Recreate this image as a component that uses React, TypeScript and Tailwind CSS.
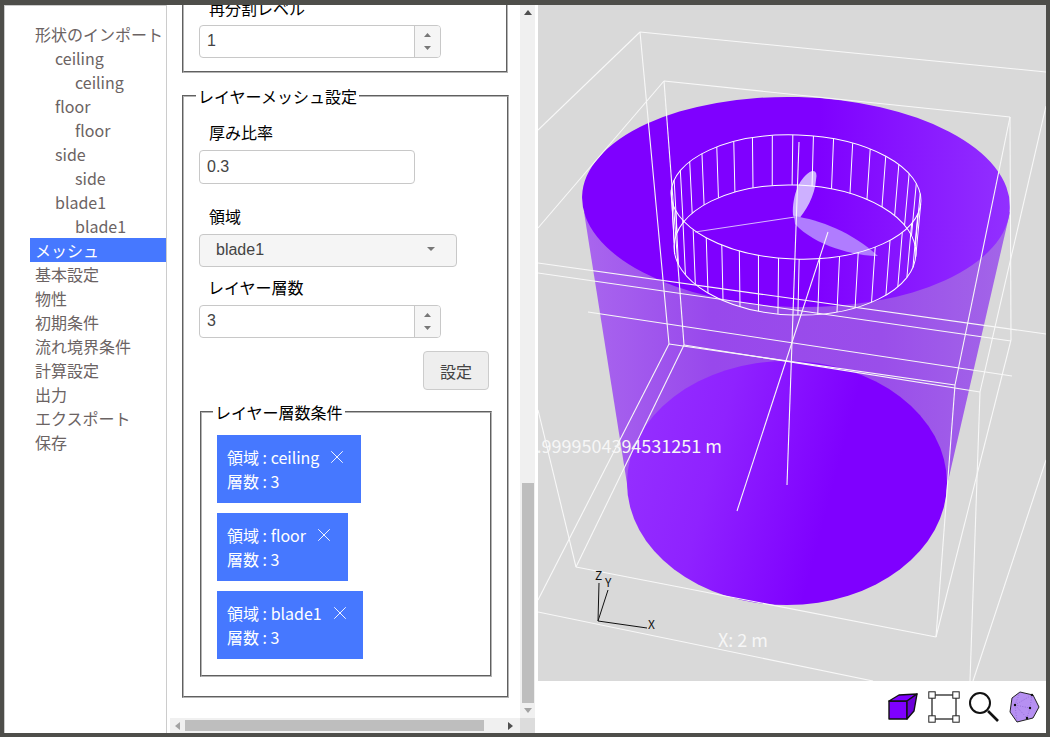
import { X } from "lucide-react";

const cjk = "font-['Noto_Sans_CJK_JP',sans-serif]";
const sans = "font-['Liberation_Sans',sans-serif]";

const navItems = [
  { label: "形状のインポート", indent: "pl-[5px]" },
  { label: "ceiling", indent: "pl-[25px]" },
  { label: "ceiling", indent: "pl-[45px]" },
  { label: "floor", indent: "pl-[25px]" },
  { label: "floor", indent: "pl-[45px]" },
  { label: "side", indent: "pl-[25px]" },
  { label: "side", indent: "pl-[45px]" },
  { label: "blade1", indent: "pl-[25px]" },
  { label: "blade1", indent: "pl-[45px]" },
  { label: "メッシュ", indent: "pl-[5px]", active: true },
  { label: "基本設定", indent: "pl-[5px]" },
  { label: "物性", indent: "pl-[5px]" },
  { label: "初期条件", indent: "pl-[5px]" },
  { label: "流れ境界条件", indent: "pl-[5px]" },
  { label: "計算設定", indent: "pl-[5px]" },
  { label: "出力", indent: "pl-[5px]" },
  { label: "エクスポート", indent: "pl-[5px]" },
  { label: "保存", indent: "pl-[5px]" },
];

const chips = ["ceiling", "floor", "blade1"];

// wireframe edges in screen coordinates
const boxLines = [
  [538, 130, 640, 32],
  [538, 228, 664, 81],
  [640, 32, 669, 344],
  [664, 81, 684, 345],
  [640, 32, 1046, 72],
  [664, 81, 1010, 117],
  [1010, 117, 1011, 340],
  [1010, 117, 955, 385],
  [955, 385, 936, 637],
  [1011, 340, 936, 637],
  [1046, 106, 980, 392],
  [980, 392, 970, 681],
  [1046, 460, 973, 681],
  [538, 263, 1046, 334],
  [538, 273, 1011, 341],
  [588, 312, 1012, 376],
  [669, 344, 955, 385],
  [684, 345, 980, 392],
  [669, 344, 538, 600],
  [684, 345, 576, 567],
  [538, 410, 576, 567],
  [576, 567, 936, 637],
  [538, 612, 873, 681],
  [799, 142, 787, 485],
  [828, 232, 737, 511],
];

const ringPoint = (cx: number, cy: number, rx: number, ry: number, t: number) => {
  const tilt = (2 * Math.PI) / 180;
  const x = rx * Math.cos(t);
  const y = ry * Math.sin(t);
  return [cx + x * Math.cos(tilt) - y * Math.sin(tilt), cy + x * Math.sin(tilt) + y * Math.cos(tilt)];
};

const ringSpokes = Array.from({ length: 38 }, (_, i) => {
  const t = (i / 38) * Math.PI * 2 + 0.04;
  return [...ringPoint(796, 197, 125, 62, t), ...ringPoint(795, 250, 121, 65, t)];
});

const Scene = () => (
  <svg viewBox="538 5 508 676" className="block h-[676px] w-[508px]">
    <defs>
      <linearGradient id="side" x1="0" x2="1" y1="0" y2="0">
        <stop offset="0" stopColor="#a966ee" />
        <stop offset="0.3" stopColor="#9848ec" />
        <stop offset="0.7" stopColor="#9a4eea" />
        <stop offset="1" stopColor="#a366e8" />
      </linearGradient>
      <linearGradient id="top" x1="0" x2="1" y1="0" y2="0">
        <stop offset="0" stopColor="#7f00ff" />
        <stop offset="0.55" stopColor="#7f00ff" />
        <stop offset="1" stopColor="#9230ff" />
      </linearGradient>
      <linearGradient id="bottom" x1="0" x2="1" y1="0.2" y2="0.4">
        <stop offset="0" stopColor="#9530ff" />
        <stop offset="0.3" stopColor="#8f22ff" />
        <stop offset="0.68" stopColor="#7f00ff" />
        <stop offset="1" stopColor="#7f00ff" />
      </linearGradient>
    </defs>
    <rect x="538" y="5" width="508" height="676" fill="#d9d9d9" />
    <polygon points="584,212 1010,212 946,490 628,490" fill="url(#side)" />
    <ellipse cx="787" cy="483" rx="160" ry="122" fill="url(#bottom)" />
    <ellipse cx="796" cy="202" rx="214" ry="105" transform="rotate(1.5 796 202)" fill="url(#top)" />
    <path d="M812 171 Q818 170 816 180 C815 195 806 212 796 222 L793 215 C792 195 800 176 812 171Z" fill="#cdb0ff" />
    <path d="M794 216 C820 220 852 232 878 256 C855 256 815 246 795 224Z" fill="#b07cff" />
    <line x1="695" y1="232" x2="795" y2="217" stroke="#d9b8ff" strokeWidth="1" />
    <g fill="none" stroke="#ffffff" strokeWidth="1">
      <ellipse cx="796" cy="197" rx="125" ry="62" transform="rotate(2 796 197)" />
      <ellipse cx="795" cy="250" rx="121" ry="65" transform="rotate(2 795 250)" />
      {ringSpokes.map((l, i) => (
        <line key={i} x1={l[0]} y1={l[1]} x2={l[2]} y2={l[3]} />
      ))}
    </g>
    <g stroke="#f8f8f8" strokeWidth="1.1">
      {boxLines.map((l, i) => (
        <line key={i} x1={l[0]} y1={l[1]} x2={l[2]} y2={l[3]} />
      ))}
    </g>
    <g stroke="#111111" strokeWidth="1" fill="none">
      <line x1="598" y1="621" x2="599" y2="583" />
      <line x1="598" y1="621" x2="608" y2="590" />
      <line x1="598" y1="621" x2="647" y2="628" />
    </g>
    <g fill="#111111" fontSize="12" fontFamily="'Noto Sans CJK JP', sans-serif">
      <text x="595" y="580">Z</text>
      <text x="605" y="587">Y</text>
      <text x="648" y="629">X</text>
    </g>
    <g fill="#f6f6f6" fontFamily="'Noto Sans CJK JP', sans-serif" fontSize="18">
      <text x="722" y="453" textAnchor="end">Y: 1.9999504394531251 m</text>
      <text x="718" y="647">X: 2 m</text>
    </g>
  </svg>
);

const ToolIcons = () => (
  <svg viewBox="886 690 156 36" className="block h-[36px] w-[156px]">
    <g stroke="#111111" strokeWidth="1.4" strokeLinejoin="round">
      <polygon points="889,701 907,701 907,719 889,719" fill="#7f00ff" />
      <polygon points="889,701 899,695 917,694 907,701" fill="#7f00ff" />
      <polygon points="907,701 917,694 914,711 907,719" fill="#6c00d8" />
    </g>
    <rect x="932" y="695" width="24" height="24" fill="none" stroke="#444444" strokeWidth="1.5" />
    {[
      [932, 695],
      [956, 695],
      [932, 719],
      [956, 719],
    ].map(([x, y]) => (
      <rect key={`${x}-${y}`} x={x - 3.2} y={y - 3.2} width="6.4" height="6.4" fill="#ffffff" stroke="#222222" strokeWidth="1" />
    ))}
    <circle cx="980" cy="703" r="10" fill="none" stroke="#111111" strokeWidth="2" />
    <line x1="988" y1="711" x2="998" y2="721" stroke="#111111" strokeWidth="2.6" />
    <polygon points="1020,692 1033,695 1039,707 1033,718 1017,722 1010,712 1012,698" fill="#b690f2" stroke="#222222" strokeWidth="1" />
    <g stroke="#7d55c8" strokeWidth="0.6" strokeDasharray="1 1.5" fill="none">
      <path d="M1015 705 L1032 695 M1015 705 L1030 708 M1015 705 L1027 718 M1030 708 L1032 695 M1030 708 L1027 718 M1015 705 L1020 692 M1015 705 L1017 722" />
    </g>
    <g fill="#111111">
      <circle cx="1032" cy="695" r="1.2" />
      <circle cx="1030" cy="708" r="1.2" />
      <circle cx="1027" cy="718" r="1.2" />
      <circle cx="1015" cy="705" r="1.2" />
    </g>
  </svg>
);

const Spinner = () => (
  <div className="flex w-[26px] flex-col items-center justify-center gap-[9px] self-stretch border-l border-[#c8c8c8] bg-[#f5f5f5]">
    <svg width="7" height="4" viewBox="0 0 7 4"><polygon points="3.5,0 7,4 0,4" fill="#777777" /></svg>
    <svg width="7" height="4" viewBox="0 0 7 4"><polygon points="0,0 7,0 3.5,4" fill="#777777" /></svg>
  </div>
);

const NumberField = ({ value, h }: { value: string; h: string }) => (
  <div className={`flex w-[242px] items-center overflow-hidden rounded-[4px] border border-[#c8c8c8] bg-white ${h} ${sans}`}>
    <span className="flex-1 pb-[1px] pl-[7px] text-[16px] text-[#444444]">{value}</span>
    <Spinner />
  </div>
);

const App = () => (
  <div className={`flex h-[737px] w-[1050px] overflow-hidden bg-[#4e4e4a] pt-[5px] pr-[4px] pb-[4px] pl-[4px] ${cjk}`}>
    <aside className="h-full w-[163px] shrink-0 border-t border-r border-l border-[#cccccc] bg-white pt-[16px] pl-[25px]">
      {navItems.map((item, i) => (
        <div
          key={i}
          className={`h-[24px] whitespace-nowrap text-[16px] leading-[24px] ${item.indent} ${
            item.active ? "bg-[#4678ff] text-white" : "text-[#6b6363]"
          }`}
        >
          {item.label}
        </div>
      ))}
    </aside>

    <div className="flex h-full w-[371px] shrink-0 flex-col bg-white">
      <div className="flex h-[713px] pr-[3px]">
        <div className="h-full w-[353px] overflow-hidden pl-[15px]">
          <fieldset className="-mt-[10px] h-[78px] w-[326px] border-2 border-[#b4b4b4] pl-[15px] [border-style:groove]">
            <div className="-mt-px ml-[10px] h-[24px] text-[16px] leading-[24px] text-black">再分割レベル</div>
            <div className="mt-[5px]">
              <NumberField value="1" h="h-[33px]" />
            </div>
          </fieldset>

          <fieldset className="mt-[11px] w-[326px] border-2 border-[#b4b4b4] pr-[15px] pb-[19px] pl-[15px] [border-style:groove]">
            <legend className="-ml-[3px] px-[2px] text-[16px] leading-[24px] text-black">レイヤーメッシュ設定</legend>
            <div className="mt-[12px] ml-[10px] h-[24px] text-[16px] leading-[24px] text-black">厚み比率</div>
            <div className={`mt-[6px] flex h-[34px] w-[216px] items-center rounded-[4px] border border-[#c8c8c8] pl-[7px] text-[16px] text-[#444444] ${sans}`}>
              0.3
            </div>
            <div className="mt-[20px] ml-[10px] h-[24px] text-[16px] leading-[24px] text-black">領域</div>
            <div className={`mt-[6px] flex h-[33px] w-[258px] items-center justify-between rounded-[4px] border border-[#c8c8c8] bg-[#f5f5f5] pr-[21px] pb-[1px] pl-[16px] text-[16px] text-[#444444] ${sans}`}>
              <span>blade1</span>
              <svg className="mb-[2px]" width="8" height="4" viewBox="0 0 8 4"><polygon points="0,0 8,0 4,4" fill="#777777" /></svg>
            </div>
            <div className="mt-[8px] ml-[9px] h-[24px] text-[16px] leading-[24px] text-black">レイヤー層数</div>
            <div className="mt-[6px]">
              <NumberField value="3" h="h-[33px]" />
            </div>
            <button className="mt-[13px] ml-[224px] flex h-[39px] w-[66px] items-center justify-center rounded-[4px] border border-[#cccccc] bg-[#eeeeee] text-[16px] text-[#444444]">
              設定
            </button>
            <fieldset className="mt-[10px] ml-px w-[292px] border-2 border-[#b4b4b4] pb-[16px] pl-[15px] [border-style:groove]">
              <legend className="-ml-[4px] px-[2px] text-[16px] leading-[24px] text-black">レイヤー層数条件</legend>
              <div className="mt-[11px] flex flex-col items-start gap-[10px]">
                {chips.map((name) => (
                  <div key={name} className="h-[68px] bg-[#4678ff] pt-[10px] pr-[12.5px] pl-[10px] text-[16px] leading-[24px] text-white">
                    <div className="flex items-center whitespace-nowrap">
                      <span>領域 : {name}</span>
                      <X className="ml-[7px] h-[22px] w-[22px]" strokeWidth={1} />
                    </div>
                    <div>層数 : 3</div>
                  </div>
                ))}
              </div>
            </fieldset>
          </fieldset>
        </div>

        {/* vertical scrollbar */}
        <div className="flex h-full w-[15px] flex-col items-center bg-[#f0f0f0]">
          <svg className="mt-[5px]" width="8" height="5" viewBox="0 0 8 5"><polygon points="4,0 8,5 0,5" fill="#505050" /></svg>
          <div className="mt-[468px] h-[220px] w-[12px] bg-[#bebebe]" />
          <svg className="mt-[5px]" width="8" height="5" viewBox="0 0 8 5"><polygon points="0,0 8,0 4,5" fill="#a3a3a3" /></svg>
        </div>
      </div>

      {/* horizontal scrollbar */}
      <div className="flex h-[15px] pr-[3px] pl-[3px]">
        <div className="flex w-[350px] items-center bg-[#f0f0f0] pl-[5px]">
          <svg width="5" height="8" viewBox="0 0 5 8"><polygon points="5,0 5,8 0,4" fill="#a3a3a3" /></svg>
          <div className="ml-[5px] h-[11px] w-[299px] bg-[#bebebe]" />
          <svg className="ml-[24px]" width="5" height="8" viewBox="0 0 5 8"><polygon points="0,0 5,4 0,8" fill="#505050" /></svg>
        </div>
        <div className="w-[15px] bg-[#dcdcdc]" />
      </div>
    </div>

    <div className="flex h-full w-[508px] shrink-0 flex-col bg-white">
      <Scene />
      <div className="flex flex-1 justify-end pt-[9px] pr-[4px]">
        <ToolIcons />
      </div>
    </div>
  </div>
);

export default App;
